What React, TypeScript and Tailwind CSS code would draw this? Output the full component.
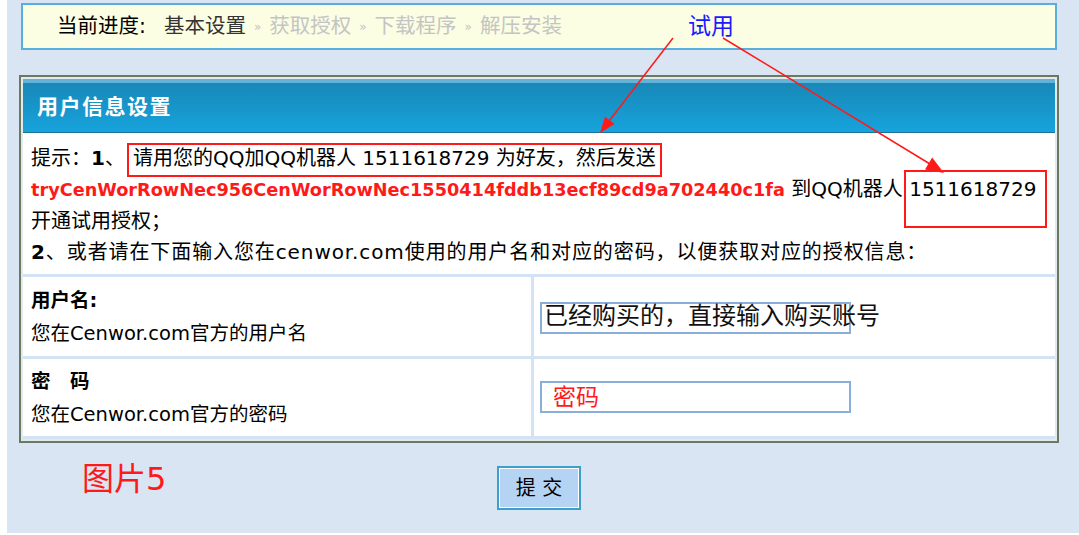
import React from "react";

function Sep() {
  return <span className="px-[8px] text-[12px] text-[#c4c4c4] leading-none">»</span>;
}

export default function App() {
  return (
    <div className="relative w-[1079px] h-[535px] bg-white overflow-hidden font-['DejaVu_Sans','Noto_Sans_CJK_SC',sans-serif] text-black">
      <div className="ml-[7px] w-[1072px] h-[533px] bg-[#dae5f3] pt-[3px]">
        {/* progress bar */}
        <div className="ml-[14px] w-[1036px] h-[47px] border-2 border-[#5aaedb] bg-[#fbfee2] flex items-center pl-[34px] text-[20.5px] leading-none">
          <span className="text-black">当前进度:</span>
          <span className="ml-[18px] text-[#333333]">基本设置</span>
          <Sep />
          <span className="text-[#c4c4c4]">获取授权</span>
          <Sep />
          <span className="text-[#c4c4c4]">下载程序</span>
          <Sep />
          <span className="text-[#c4c4c4]">解压安装</span>
        </div>

        {/* panel */}
        <div className="mt-[25px] ml-[12px] w-[1040px] border-2 border-[#6a7a62] p-[2px] bg-[#e3eaee]">
          <div className="h-[54px] border-t-[4px] border-t-[#63b3d9] border-b border-b-[#1f7197] bg-gradient-to-b from-[#1888b8] to-[#16a3dc] flex items-center pl-[14px]">
            <span className="text-white font-bold text-[21px] tracking-[1.5px]">用户信息设置</span>
          </div>

          {/* hint */}
          <div className="bg-white h-[141px] pl-[8px] pt-[10px] text-[20px] leading-[31px]">
            <div className="whitespace-nowrap">
              提示：<b>1</b>、
              <span className="relative inline-block ml-[8px]">
                请用您的QQ加QQ机器人 1511618729 为好友，然后发送
                <span className="absolute left-[-6px] right-[-6px] top-[0px] bottom-[-3px] border-2 border-[#ff1a1a]" />
              </span>
            </div>
            <div className="whitespace-nowrap">
              <span className="font-bold text-[#ff1a1a] text-[17.7px]">tryCenWorRowNec956CenWorRowNec1550414fddb13ecf89cd9a702440c1fa</span>{" "}
              到QQ机器人{" "}
              <span className="relative inline-block">
                1511618729
                <span className="absolute left-[-5px] w-[143px] top-[-4px] h-[58px] border-2 border-[#ff1a1a]" />
              </span>
            </div>
            <div className="whitespace-nowrap">开通试用授权；</div>
            <div className="whitespace-nowrap tracking-[0.9px]">
              <b>2</b>、或者请在下面输入您在cenwor.com使用的用户名和对应的密码，以便获取对应的授权信息：
            </div>
          </div>

          {/* form table */}
          <div className="grid grid-cols-[508px_1fr] gap-[3px] bg-[#d3e3f3] py-[3px] text-[19.5px]">
            <div className="bg-white h-[79px] pl-[8px] pt-[9px] leading-[30px]">
              <div className="font-bold">用户名:</div>
              <div className="mt-[3px]">您在Cenwor.com官方的用户名</div>
            </div>
            <div className="bg-white h-[79px] pl-[6px] pt-[25px]">
              <div className="relative w-[311px] h-[32px] border-2 border-[#8aaed9] bg-white">
                <span className="absolute left-[2px] top-[-2px] whitespace-nowrap text-[24px] leading-[28px] text-[#111]">
                  已经购买的，直接输入购买账号
                </span>
              </div>
            </div>
            <div className="bg-white h-[77px] pl-[8px] pt-[8px] leading-[30px]">
              <div className="font-bold">密　码</div>
              <div className="mt-[3px]">您在Cenwor.com官方的密码</div>
            </div>
            <div className="bg-white h-[77px] pl-[6px] pt-[22px]">
              <div className="w-[311px] h-[32px] border-2 border-[#8aaed9] bg-white flex items-center pl-[11px]">
                <span className="text-[23px] leading-none text-[#ff1a1a]">密码</span>
              </div>
            </div>
          </div>
        </div>

        {/* bottom */}
        <div className="flex mt-[18px] ml-[75px]">
          <div className="w-[415px] text-[32px] leading-[36px] text-[#ff1a1a]">图片5</div>
          <button className="mt-[5px] w-[84px] h-[44px] border-2 border-[#3d9fcb] shadow-[inset_0_0_0_1px_#ffffff] bg-[#b5d4f4] text-[20px] text-black flex items-center justify-center">
            提 交
          </button>
        </div>
      </div>

      {/* annotations */}
      <span className="absolute left-[688px] top-[12px] text-[23px] leading-[28px] text-[#1a1aff]">试用</span>
      <svg className="absolute left-0 top-0 pointer-events-none" width="1079" height="535" viewBox="0 0 1079 535">
        <line x1="673" y1="38" x2="606" y2="125" stroke="#ff1a1a" strokeWidth="1.5" />
        <polygon points="600,133 614.5,124 605,116.7" fill="#ff1a1a" />
        <line x1="723" y1="38" x2="930" y2="164" stroke="#ff1a1a" strokeWidth="1.5" />
        <polygon points="944,173 925,169.6 932.2,157.6" fill="#ff1a1a" />
      </svg>
    </div>
  );
}
